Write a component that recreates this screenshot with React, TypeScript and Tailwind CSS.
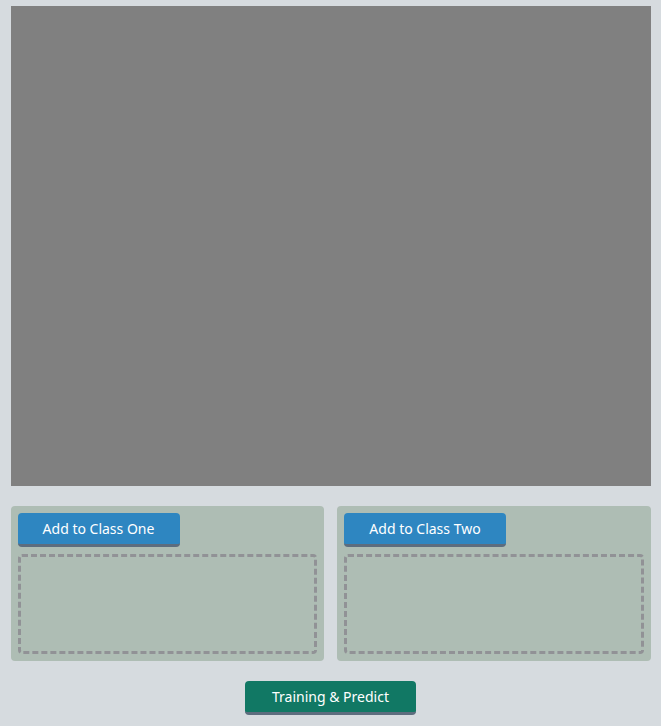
import type { ReactNode } from 'react';

function ActionButton({ tone, children }: { tone: string; children: ReactNode }) {
  return (
    <button
      type="button"
      className={`rounded-[4px] border-b-[3px] border-[#5d6d7e] pt-[6px] pb-[5px] text-sm leading-5 text-white ${tone}`}
    >
      {children}
    </button>
  );
}

function ClassPanel({ name }: { name: string }) {
  return (
    <section className="flex min-w-0 flex-1 flex-col items-start gap-[7px] rounded-[4px] bg-[#aebdb4] p-[7px]">
      <ActionButton tone="min-w-[162px] px-6 bg-[#2e86c1]">Add to Class {name}</ActionButton>
      <div className="h-[100px] w-full rounded-[4px] border-[3px] border-dashed border-[#919296]" />
    </section>
  );
}

export default function App() {
  return (
    <main className="min-h-screen bg-[#d6dbdf] pt-[6px] pb-[11px] font-['Noto_Sans',sans-serif]">
      <div className="mx-auto flex max-w-[640px] flex-col gap-5">
        <canvas className="aspect-[4/3] w-full bg-[#808080]" />
        <div className="flex gap-[13px]">
          <ClassPanel name="One" />
          <ClassPanel name="Two" />
        </div>
        <div className="flex justify-center">
          <ActionButton tone="min-w-[171px] px-6 bg-[#117864]">Training &amp; Predict</ActionButton>
        </div>
      </div>
    </main>
  );
}
